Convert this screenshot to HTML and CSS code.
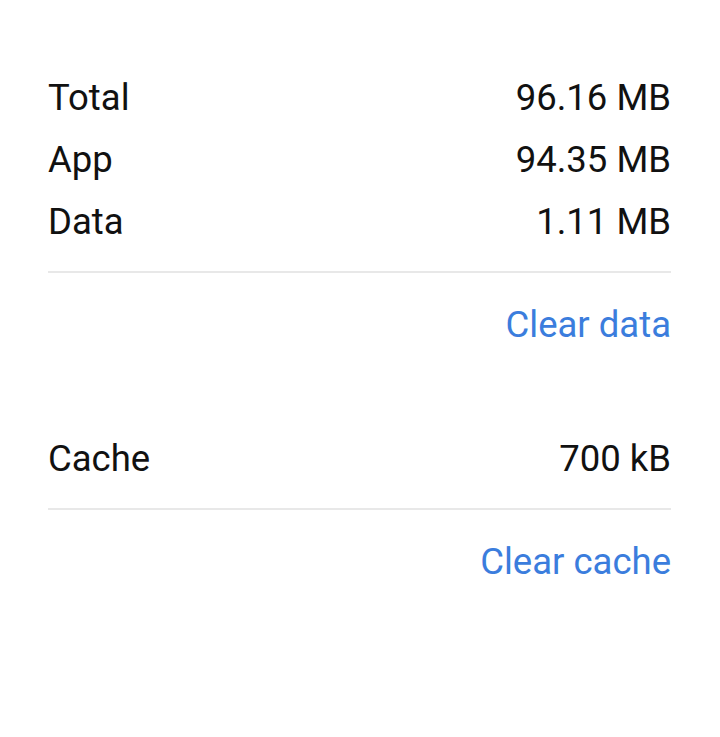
FILE: index.html
```html
<!DOCTYPE html>
<html lang="en">
  <head>
    <meta charset="UTF-8" />
    <meta name="viewport" content="width=device-width, initial-scale=1.0" />
    <title>Storage</title>
    <link rel="stylesheet" href="styles.css">
  </head>
  <body>
    <div class="storage">
      <section class="group">
        <div class="row"><span>Total</span><span>96.16 MB</span></div>
        <div class="row"><span>App</span><span>94.35 MB</span></div>
        <div class="row"><span>Data</span><span>1.11 MB</span></div>
        <div class="divider"></div>
        <div class="action"><a href="#">Clear data</a></div>
      </section>

      <section class="group">
        <div class="row"><span>Cache</span><span>700 kB</span></div>
        <div class="divider"></div>
        <div class="action"><a href="#">Clear cache</a></div>
      </section>
    </div>
  </body>
</html>
```

FILE: styles.css
```css
* {
  box-sizing: border-box;
}

body {
  margin: 0;
  padding: 0;
  background-color: #ffffff;
  font-family: Roboto, "Noto Sans", sans-serif;
  color: #111111;
}

.storage {
  padding: 67px 49px 0 48px;
  display: flex;
  flex-direction: column;
  gap: 72px;
}

.row {
  display: flex;
  justify-content: space-between;
  font-size: 36.5px;
  line-height: 62px;
}

.divider {
  margin-top: 18px;
  height: 2px;
  background-color: #e8e8e8;
}

.action {
  margin-top: 21px;
  text-align: right;
  font-size: 36.5px;
  line-height: 62px;
}

.action a {
  color: #3b7ddd;
  text-decoration: none;
}
```
